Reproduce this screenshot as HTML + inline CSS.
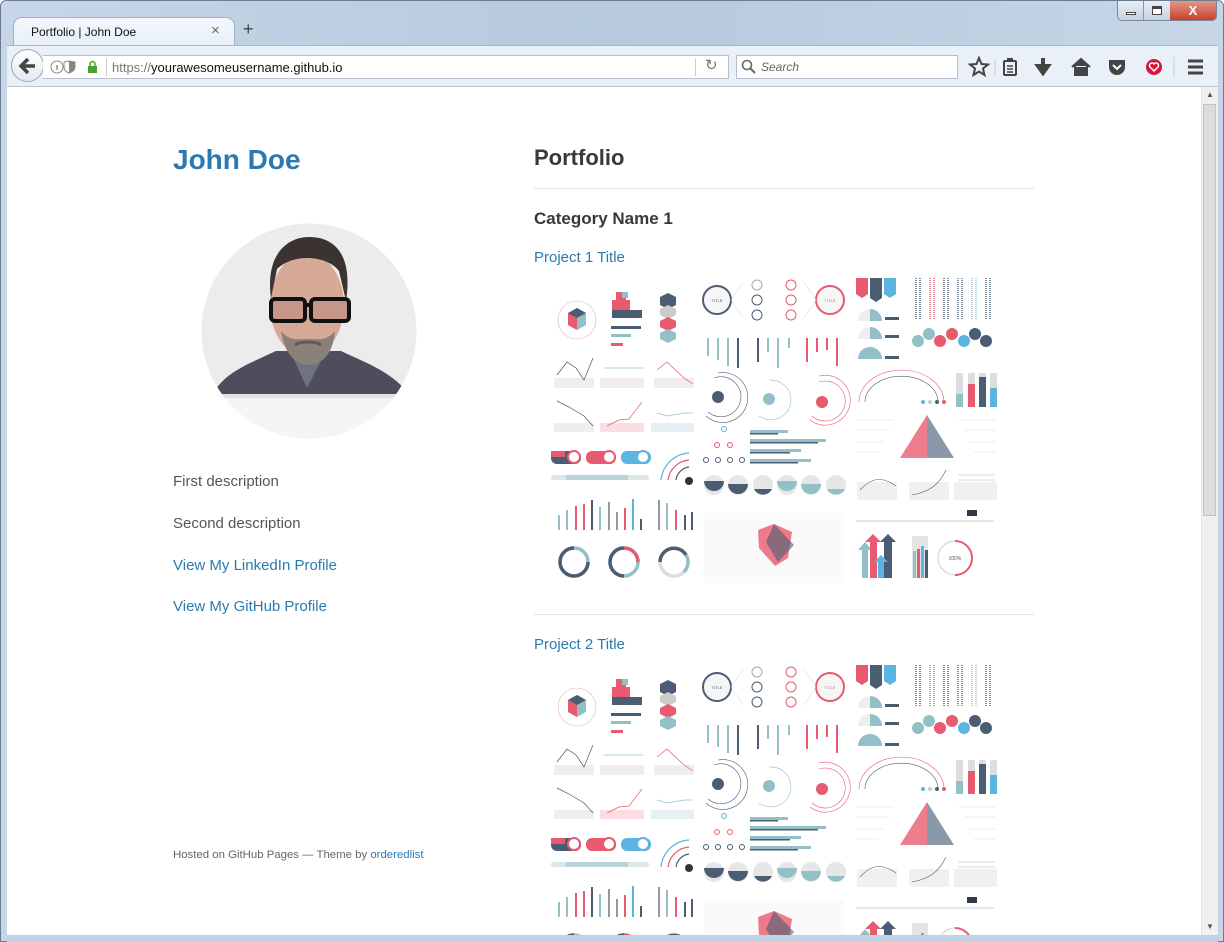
<!DOCTYPE html>
<html><head><meta charset="utf-8">
<style>
*{margin:0;padding:0;box-sizing:border-box}
body{width:1224px;height:942px;overflow:hidden;font-family:"Liberation Sans",sans-serif;background:#fff;position:relative}
.abs{position:absolute}
a{color:#2a7ab0;text-decoration:none}
</style></head><body>
<div class="abs" style="left:0;top:0;width:1224px;height:942px;background:linear-gradient(90deg,#c6d6e8,#b6c9dd 50%,#c6d6e8);border:1px solid #6d7d90;border-radius:6px 6px 0 0"></div>
<div class="abs" style="left:1117px;top:1px;width:100px;height:20px;border:1px solid #7a8899;border-top:none;border-radius:0 0 5px 5px;overflow:hidden;display:flex">
 <div style="width:26px;background:linear-gradient(#e8eef5,#c5d2e0);border-right:1px solid #8897a8;position:relative"><div class="abs" style="left:8px;top:11px;width:10px;height:3px;background:#fff;border:1px solid #444"></div></div>
 <div style="width:26px;background:linear-gradient(#e8eef5,#c5d2e0);position:relative"><div class="abs" style="left:8px;top:5px;width:10px;height:9px;border:1px solid #444;border-top:3px solid #444;background:#fff"></div></div>
 <div style="flex:1;background:linear-gradient(#e4988a,#c7402c);color:#fff;font-weight:bold;font-size:13px;text-align:center;line-height:19px">X</div>
</div>
<div class="abs" style="left:13px;top:17px;width:222px;height:30px;background:linear-gradient(#f5f8fb,#e6eef7);border:1px solid #9fb1c6;border-bottom:none;border-radius:9px 9px 0 0"></div>
<div class="abs" style="left:31px;top:25px;font-size:12px;color:#111">Portfolio | John Doe</div>
<div class="abs" style="left:211px;top:22px;font-size:15px;color:#666">×</div>
<div class="abs" style="left:243px;top:19px;font-size:18px;color:#444">+</div>
<div class="abs" style="left:7px;top:45px;width:1211px;height:42px;background:#e9f0f8;border-top:1px solid #a7b8cc;border-bottom:1px solid #b6c4d3"></div>
<div class="abs" style="left:11px;top:49px;width:33px;height:33px;border-radius:50%;border:1px solid #9aa8b8;background:linear-gradient(#fff,#e4eaf1)"></div>
<svg class="abs" style="left:18px;top:57px" width="20" height="18"><path d="M10 2 L3 9 L10 16 M3 9 H17" stroke="#444" stroke-width="3.5" fill="none"/></svg>
<div class="abs" style="left:43px;top:55px;width:686px;height:24px;background:#fff;border:1px solid #b4c0ce;border-left:none"></div>
<svg class="abs" style="left:50px;top:59px" width="50" height="16"><circle cx="7" cy="8" r="6" fill="none" stroke="#888"/><rect x="6.3" y="6" width="1.4" height="5" fill="#888"/><path d="M19 2 L25 3 V8 C25 11 22 13 19 14 Z" fill="#888"/><path d="M19 2 L25 3 V8 C25 11 22 13 19 14 C16 13 14 11 14 8 V3Z" fill="none" stroke="#888"/><rect x="38" y="7" width="9" height="7" fill="#4aa02c"/><path d="M40 7 V5 a2.5 2.5 0 0 1 5 0 V7" fill="none" stroke="#4aa02c" stroke-width="1.5"/></svg>
<div class="abs" style="left:106px;top:58px;width:1px;height:18px;background:#ccc"></div>
<div class="abs" style="left:112px;top:60px;font-size:13px;color:#111"><span style="color:#777">https://</span>yourawesomeusername.github.io</div>
<div class="abs" style="left:695px;top:58px;width:1px;height:18px;background:#ccc"></div>
<div class="abs" style="left:705px;top:56px;font-size:15px;color:#777">↻</div>
<div class="abs" style="left:736px;top:55px;width:222px;height:24px;background:#fff;border:1px solid #b4c0ce"></div>
<svg class="abs" style="left:741px;top:59px" width="16" height="16"><circle cx="6" cy="6" r="4.5" fill="none" stroke="#666" stroke-width="1.6"/><path d="M9 9 L14 14" stroke="#666" stroke-width="2"/></svg>
<div class="abs" style="left:761px;top:60px;font-size:12px;color:#666;font-style:italic">Search</div>
<svg class="abs" style="left:968px;top:55px" width="240" height="24">
 <path d="M11 3 L13.5 9 L20 9.5 L15 13.5 L16.5 20 L11 16.5 L5.5 20 L7 13.5 L2 9.5 L8.5 9 Z" fill="none" stroke="#444" stroke-width="2"/>
 <line x1="27" y1="4" x2="27" y2="20" stroke="#ccc"/>
 <rect x="36" y="6" width="12" height="14" rx="1" fill="none" stroke="#444" stroke-width="2"/><rect x="39" y="3" width="6" height="4" fill="#444"/><path d="M39 11h6M39 14h6M39 17h6" stroke="#444" stroke-width="1.5"/>
 <path d="M75 3 V12 M70 11 L75 18 L80 11 Z" stroke="#444" stroke-width="4" fill="#444"/>
 <path d="M104 12 L113 4 L122 12 M107 11 V20 H119 V11" fill="#444" stroke="#444" stroke-width="2"/>
 <path d="M141 5 H157 V12 C157 17 153 20 149 20 C145 20 141 17 141 12 Z" fill="#444"/><path d="M145 10 L149 14 L153 10" stroke="#fff" stroke-width="2" fill="none"/>
 <circle cx="186" cy="12" r="8" fill="#d7143c"/><path d="M186 16 L182 12 a2 2 0 0 1 4 -3 a2 2 0 0 1 4 3 Z" fill="none" stroke="#fff" stroke-width="1.5"/>
 <line x1="206" y1="2" x2="206" y2="22" stroke="#ccc"/>
 <path d="M220 6h15M220 12h15M220 18h15" stroke="#444" stroke-width="3"/>
</svg>
<div class="abs" style="left:7px;top:87px;width:1194px;height:848px;background:#fff"></div>
<div class="abs" style="left:1201px;top:87px;width:17px;height:848px;background:#f0f0f0;border-left:1px solid #e4e4e4"></div>
<div class="abs" style="left:1203px;top:104px;width:13px;height:412px;background:#dcdcdc;border:1px solid #c4c4c4"></div>
<div class="abs" style="left:1206px;top:90px;font-size:8px;color:#555">▲</div>
<div class="abs" style="left:1206px;top:922px;font-size:8px;color:#555">▼</div>
<div class="abs" style="left:7px;top:935px;width:1211px;height:7px;background:#c0d1e4"></div>

<div class="abs" style="left:173px;top:144px;font-size:28px;font-weight:bold;color:#2a7ab0">John Doe</div>
<svg class="abs" style="left:201px;top:223px" width="216" height="216">
 <defs><clipPath id="cc"><circle cx="108" cy="108" r="107.5"/></clipPath></defs>
 <g clip-path="url(#cc)">
  <rect width="216" height="216" fill="#ececec"/>
  <path d="M10 175 C20 150 50 140 75 128 L140 128 C165 140 195 150 210 175 Z" fill="#4f4d5c"/>
  <path d="M90 130 L106 165 L124 130 Z" fill="#6f7380"/>
  <ellipse cx="106" cy="82" rx="37" ry="52" fill="#d7a997"/>
  <path d="M70 75 C64 32 86 14 108 14 C134 14 152 32 145 78 L138 48 C126 32 92 30 76 46 Z" fill="#3a3330"/>
  <path d="M80 108 C84 136 100 142 107 142 C118 142 132 134 134 108 C126 118 118 116 107 116 C96 116 88 118 80 108Z" fill="#8a807a"/>
  <path d="M94 122 C100 118 114 118 120 122" stroke="#6a5550" stroke-width="3" fill="none"/>
  <rect x="70" y="76" width="34" height="22" rx="4" fill="#c7968a" stroke="#111" stroke-width="4"/>
  <rect x="110" y="76" width="38" height="22" rx="4" fill="#c7968a" stroke="#111" stroke-width="4"/>
  <rect x="102" y="80" width="10" height="4" fill="#111"/>
  <rect x="0" y="171" width="216" height="45" fill="#f5f5f5"/>
  <rect x="0" y="171" width="216" height="4" fill="#e2e2e2"/>
 </g>
</svg>
<div class="abs" style="left:173px;top:473px;font-size:15px;color:#555">First description</div>
<div class="abs" style="left:173px;top:515px;font-size:15px;color:#555">Second description</div>
<a class="abs" style="left:173px;top:557px;font-size:15px">View My LinkedIn Profile</a>
<a class="abs" style="left:173px;top:598px;font-size:15px">View My GitHub Profile</a>
<div class="abs" style="left:173px;top:849px;font-size:11.4px;color:#666">Hosted on GitHub Pages — Theme by <a>orderedlist</a></div>

<div class="abs" style="left:534px;top:145px;font-size:22px;font-weight:bold;color:#393939">Portfolio</div>
<div class="abs" style="left:534px;top:188px;width:500px;height:1px;background:#e2e2e2"></div>
<div class="abs" style="left:534px;top:209px;font-size:17px;font-weight:bold;color:#393939">Category Name 1</div>
<a class="abs" style="left:534px;top:249px;font-size:15px">Project 1 Title</a>
<div class="abs" style="left:534px;top:614px;width:500px;height:1px;background:#e2e2e2"></div>
<a class="abs" style="left:534px;top:636px;font-size:15px">Project 2 Title</a>

<svg class="abs" style="left:534px;top:270px" width="470" height="315" viewBox="0 0 470 315">
<defs><g id="info" font-family="Liberation Sans" >
 <circle cx="43" cy="50" r="19" fill="none" stroke="#eab" stroke-width=".6"/>
 <path d="M34 43 L43 38 L52 43 V55 L43 60 L34 55Z" fill="#93bfc7"/><path d="M34 43 L43 48 V60 L34 55Z" fill="#e85a6f"/><path d="M34 43 L43 38 L52 43 L43 48Z" fill="#4b5d73"/>
 <path d="M78 30h10v10h-10zM86 30h10v10h-10zM82 22h10v9h-10z" fill="#e85a6f"/><path d="M78 40h30v8H78z" fill="#4b5d73"/><rect x="88" y="22" width="6" height="6" fill="#93bfc7"/>
 <rect x="77" y="56" width="30" height="3" fill="#4b5d73"/><rect x="77" y="64" width="20" height="3" fill="#93bfc7"/><rect x="77" y="73" width="12" height="3" fill="#e85a6f"/>
 <path d="M126 27l8-4 8 4v8l-8 4-8-4z" fill="#4b5d73"/><path d="M126 39l8-4 8 4v6l-8 4-8-4z" fill="#ccc"/><path d="M126 51l8-4 8 4v6l-8 4-8-4z" fill="#e85a6f"/><path d="M126 63l8-4 8 4v6l-8 4-8-4z" fill="#93bfc7"/>
 <g fill="#eee"><rect x="20" y="108" width="40" height="10"/><rect x="66" y="108" width="44" height="10"/><rect x="120" y="108" width="40" height="10"/><rect x="20" y="153" width="40" height="9"/><rect x="66" y="153" width="44" height="9" fill="#fbdde2"/><rect x="117" y="153" width="43" height="9" fill="#e6f0f2"/></g>
 <polyline points="23,105 33,92 42,98 50,110 59,88" fill="none" stroke="#555" stroke-width=".7"/>
 <polyline points="70,98 90,98 109,98" fill="none" stroke="#93bfc7" stroke-width=".7"/>
 <polyline points="123,100 133,92 150,108 159,114" fill="none" stroke="#e85a6f" stroke-width=".7"/>
 <polyline points="23,131 35,137 50,146 59,156" fill="none" stroke="#555" stroke-width=".7"/>
 <polyline points="73,156 85,150 95,149 108,132" fill="none" stroke="#e85a6f" stroke-width=".7"/>
 <polyline points="123,143 133,146 150,143 159,143" fill="none" stroke="#93bfc7" stroke-width=".7"/>
 <rect x="17" y="181" width="30" height="13" rx="6" fill="#4b5d73"/><rect x="17" y="181" width="14" height="6" fill="#e85a6f"/><circle cx="40" cy="187" r="6" fill="#fff" stroke="#e85a6f" stroke-width="2"/>
 <rect x="52" y="181" width="30" height="13" rx="6" fill="#e85a6f"/><circle cx="75" cy="187" r="6" fill="#fff" stroke="#e85a6f" stroke-width="2"/>
 <rect x="87" y="181" width="30" height="13" rx="6" fill="#5bb5e0"/><circle cx="109" cy="187" r="6" fill="#fff" stroke="#5bb5e0" stroke-width="2"/>
 <rect x="17" y="205" width="98" height="5" rx="2" fill="#dfe6e8"/><rect x="32" y="205" width="62" height="5" fill="#b9d3d8"/>
 <path d="M127 210 A30 30 0 0 1 155 183" fill="none" stroke="#5bb5e0" stroke-width="1.2"/><path d="M134 210 A23 23 0 0 1 155 190" fill="none" stroke="#e85a6f" stroke-width="1.2"/><path d="M142 210 A15 15 0 0 1 155 197" fill="none" stroke="#4b5d73" stroke-width="1.2"/><circle cx="155" cy="211" r="4" fill="#333"/>
 <g fill="#93bfc7"><rect x="24" y="245" width="2" height="15"/><rect x="32" y="240" width="2" height="20"/><rect x="65" y="237" width="2" height="23"/><rect x="132" y="233" width="2" height="27"/><rect x="150" y="245" width="2" height="15" fill="#4b5d73"/></g>
 <g fill="#e85a6f"><rect x="41" y="236" width="2" height="24"/><rect x="49" y="234" width="2" height="26"/><rect x="90" y="238" width="2" height="22"/><rect x="141" y="240" width="2" height="20"/></g>
 <g fill="#5bb5e0"><rect x="57" y="230" width="2" height="30" fill="#4b5d73"/><rect x="98" y="229" width="2" height="31"/><rect x="82" y="242" width="2" height="18" fill="#999"/><rect x="74" y="232" width="2" height="28" fill="#999"/><rect x="106" y="249" width="2" height="11" fill="#4b5d73"/><rect x="124" y="230" width="2" height="30" fill="#999"/><rect x="157" y="242" width="2" height="18" fill="#4b5d73"/></g>
 <circle cx="40" cy="292" r="14" fill="none" stroke="#93bfc7" stroke-width="3.5"/><path d="M40 278 A14 14 0 1 0 54 292" fill="none" stroke="#4b5d73" stroke-width="3.5"/>
 <circle cx="90" cy="292" r="14" fill="none" stroke="#93bfc7" stroke-width="3.5"/><path d="M90 278 A14 14 0 0 1 104 292" fill="none" stroke="#e85a6f" stroke-width="3.5"/><path d="M76 292 A14 14 0 0 1 90 278" fill="none" stroke="#4b5d73" stroke-width="3.5"/><path d="M90 306 A14 14 0 0 1 76 292" fill="none" stroke="#4b5d73" stroke-width="3.5"/>
 <circle cx="140" cy="292" r="14" fill="none" stroke="#ddd" stroke-width="3.5"/><path d="M126 292 A14 14 0 0 1 152 285" fill="none" stroke="#4b5d73" stroke-width="3.5"/><path d="M152 285 A14 14 0 0 1 150 302" fill="none" stroke="#93bfc7" stroke-width="3.5"/>
 <circle cx="183" cy="30" r="14" fill="#f6f6f6" stroke="#4b5d73" stroke-width="2"/><text x="183" y="32" font-size="4" text-anchor="middle" fill="#555">TITLE</text>
 <circle cx="296" cy="30" r="14" fill="#f6f6f6" stroke="#e85a6f" stroke-width="2"/><text x="296" y="32" font-size="4" text-anchor="middle" fill="#e85a6f">TITLE</text>
 <g fill="none" stroke-width="1"><circle cx="223" cy="15" r="5" stroke="#aaa"/><circle cx="223" cy="30" r="5" stroke="#4b5d73"/><circle cx="223" cy="45" r="5" stroke="#4b5d73"/><circle cx="257" cy="15" r="5" stroke="#e85a6f"/><circle cx="257" cy="30" r="5" stroke="#e85a6f"/><circle cx="257" cy="45" r="5" stroke="#e85a6f"/></g>
 <path d="M197 30 L209 12 M197 30 L209 48 M282 30 L270 12 M282 30 L270 48" stroke="#ddd" stroke-width=".6"/>
 <g fill="#93bfc7"><rect x="173" y="68" width="2" height="18"/><rect x="183" y="68" width="2" height="22"/><rect x="193" y="68" width="2" height="28"/><rect x="203" y="68" width="2" height="30" fill="#4b5d73"/><rect x="223" y="68" width="2" height="24" fill="#4b5d73"/><rect x="233" y="68" width="2" height="14"/><rect x="243" y="68" width="2" height="30"/><rect x="254" y="68" width="2" height="10"/></g>
 <g fill="#e85a6f"><rect x="272" y="68" width="2" height="24"/><rect x="282" y="68" width="2" height="14"/><rect x="292" y="68" width="2" height="12"/><rect x="302" y="68" width="2" height="28"/></g>
 <circle cx="184" cy="127" r="6" fill="#4b5d73"/><path d="M180 108 A20 20 0 1 1 174 142" fill="none" stroke="#4b5d73" stroke-width=".6"/><path d="M184 103 A25 25 0 1 1 172 146" fill="none" stroke="#4b5d73" stroke-width=".6"/>
 <circle cx="235" cy="129" r="6" fill="#93bfc7"/><path d="M235 110 A20 20 0 1 1 225 146" fill="none" stroke="#93bfc7" stroke-width=".6"/>
 <circle cx="288" cy="132" r="6" fill="#e85a6f"/><path d="M285 112 A20 20 0 1 1 278 146" fill="none" stroke="#e85a6f" stroke-width=".6"/><path d="M285 106 A25 25 0 1 1 276 150" fill="none" stroke="#e85a6f" stroke-width=".6"/>
 <circle cx="190" cy="159" r="2.5" fill="none" stroke="#5bb5e0"/><circle cx="183" cy="175" r="2.5" fill="none" stroke="#e85a6f"/><circle cx="196" cy="175" r="2.5" fill="none" stroke="#e85a6f"/>
 <g fill="none" stroke="#4b5d73"><circle cx="172" cy="190" r="2.5"/><circle cx="184" cy="190" r="2.5"/><circle cx="196" cy="190" r="2.5"/><circle cx="208" cy="190" r="2.5"/></g>
 <g fill="#93bfc7"><rect x="216" y="160" width="38" height="3"/><rect x="216" y="169" width="76" height="3"/><rect x="216" y="179" width="51" height="3"/><rect x="216" y="189" width="61" height="3"/></g>
 <g fill="#4b5d73"><rect x="216" y="163" width="28" height="1.5"/><rect x="216" y="172" width="68" height="1.5"/><rect x="216" y="182" width="40" height="1.5"/><rect x="216" y="192" width="48" height="1.5"/></g>
 <g><circle cx="180" cy="215" r="10" fill="#e6e6e6"/><path d="M170 211 H190 A10 10 0 0 1 170 211Z" fill="#4b5d73"/>
 <circle cx="204" cy="215" r="10" fill="#e6e6e6"/><path d="M194 214 H214 A10 10 0 0 1 194 214Z" fill="#4b5d73"/>
 <circle cx="229" cy="215" r="10" fill="#e6e6e6"/><path d="M220 219 H238 A10 10 0 0 1 220 219Z" fill="#4b5d73"/>
 <circle cx="253" cy="215" r="10" fill="#e6e6e6"/><path d="M243 211 H263 A10 10 0 0 1 243 211Z" fill="#93bfc7"/>
 <circle cx="277" cy="215" r="10" fill="#e6e6e6"/><path d="M267 214 H287 A10 10 0 0 1 267 214Z" fill="#93bfc7"/>
 <circle cx="302" cy="215" r="10" fill="#e6e6e6"/><path d="M293 219 H311 A10 10 0 0 1 293 219Z" fill="#93bfc7"/></g>
 <rect x="170" y="243" width="140" height="70" fill="#fafafa"/>
 <path d="M240 254 L258 262 L254 288 L241 296 L225 278 L224 260Z" fill="#e85a6f" opacity=".8"/><path d="M240 254 L260 275 L244 292 L232 272Z" fill="#4b5d73" opacity=".6"/>
 <path d="M322 8h12v16l-6 4-6-4z" fill="#e85a6f"/><path d="M336 8h12v20l-6 4-6-4z" fill="#4b5d73"/><path d="M350 8h12v16l-6 4-6-4z" fill="#5bb5e0"/>
 <g stroke-width="1.4"><path d="M382 8V50M386 8V50" stroke="#4b5d73" stroke-dasharray="1 1"/><path d="M396 8V50M400 8V50" stroke="#e85a6f" stroke-dasharray="1 1"/><path d="M410 8V50M414 8V50" stroke="#4b5d73" stroke-dasharray="1 1"/><path d="M424 8V50M428 8V50" stroke="#4b5d73" stroke-dasharray="1 1"/><path d="M438 8V50M442 8V50" stroke="#93bfc7" stroke-dasharray="1 1"/><path d="M452 8V50M456 8V50" stroke="#4b5d73" stroke-dasharray="1 1"/></g>
 <path d="M324 51 A12 12 0 0 1 348 51Z" fill="#eee"/><path d="M336 39 A12 12 0 0 1 348 51 H336Z" fill="#93bfc7"/>
 <path d="M324 69 A12 12 0 0 1 348 69Z" fill="#eee"/><path d="M336 57 A12 12 0 0 1 348 69 H336Z" fill="#93bfc7"/>
 <path d="M324 89 A12 12 0 0 1 348 89Z" fill="#93bfc7"/>
 <rect x="351" y="47" width="14" height="3" fill="#4b5d73"/><rect x="351" y="65" width="14" height="3" fill="#4b5d73"/><rect x="351" y="86" width="14" height="3" fill="#4b5d73"/>
 <g><circle cx="384" cy="71" r="6" fill="#93bfc7"/><circle cx="395" cy="64" r="6" fill="#93bfc7"/><circle cx="406" cy="71" r="6" fill="#e85a6f"/><circle cx="418" cy="64" r="6" fill="#e85a6f"/><circle cx="430" cy="71" r="6" fill="#5bb5e0"/><circle cx="441" cy="64" r="6" fill="#4b5d73"/><circle cx="452" cy="71" r="6" fill="#4b5d73"/></g>
 <path d="M325 132 A40 30 0 0 1 410 132" fill="none" stroke="#e85a6f" stroke-width=".6"/><path d="M331 132 A34 24 0 0 1 404 132" fill="none" stroke="#4b5d73" stroke-width=".6"/>
 <circle cx="389" cy="132" r="2" fill="#5bb5e0"/><circle cx="396" cy="132" r="2" fill="#ccc"/><circle cx="403" cy="132" r="2" fill="#4b5d73"/><circle cx="410" cy="132" r="2" fill="#e85a6f"/>
 <rect x="422" y="103" width="7" height="34" rx="1" fill="#ddd"/><rect x="422" y="124" width="7" height="13" fill="#93bfc7"/>
 <rect x="434" y="103" width="7" height="34" rx="1" fill="#ddd"/><rect x="434" y="114" width="7" height="23" fill="#e85a6f"/>
 <rect x="445" y="103" width="7" height="34" rx="1" fill="#ddd"/><rect x="445" y="107" width="7" height="30" fill="#4b5d73"/>
 <rect x="456" y="103" width="7" height="34" rx="1" fill="#ddd"/><rect x="456" y="118" width="7" height="19" fill="#5bb5e0"/>
 <path d="M393 145 L366 188 H393Z" fill="#ec7e8d"/><path d="M393 145 L420 188 H393Z" fill="#8a98a8"/>
 <path d="M322 150H360M322 160H355M322 172H350M322 182H345M425 150H462M430 160H462M435 172H462M440 182H462" stroke="#ddd" stroke-width=".6"/>
 <rect x="323" y="212" width="40" height="18" fill="#f0f0f0"/><rect x="375" y="212" width="40" height="18" fill="#f0f0f0"/><rect x="420" y="212" width="43" height="18" fill="#f0f0f0"/>
 <path d="M326 220 C340 205 350 208 362 216" fill="none" stroke="#4b5d73" stroke-width=".6"/><path d="M378 225 C395 222 405 215 412 200" fill="none" stroke="#4b5d73" stroke-width=".6"/><path d="M424 205 H461 M424 210 H461" stroke="#93bfc7" stroke-width=".6"/>
 <path d="M322 251 H460" stroke="#999" stroke-width=".6"/><rect x="433" y="240" width="10" height="6" fill="#2f3a48"/>
 <path d="M328 308 V280 H324 L331 272 L338 280 H334 V308Z" fill="#93bfc7"/><path d="M336 308 V272 H331 L339 264 L347 272 H343 V308Z" fill="#e85a6f"/><path d="M350 308 V272 H346 L354 264 L362 272 H358 V308Z" fill="#4b5d73"/><path d="M344 308 V292 H340 L347 285 L354 292 H350 V308Z" fill="#5bb5e0"/>
 <rect x="378" y="266" width="16" height="42" fill="#e4e4e4"/><rect x="379" y="281" width="3" height="27" fill="#93bfc7"/><rect x="383" y="279" width="3" height="29" fill="#e85a6f"/><rect x="387" y="276" width="3" height="32" fill="#5bb5e0"/><rect x="391" y="280" width="3" height="28" fill="#4b5d73"/>
 <circle cx="421" cy="288" r="17" fill="none" stroke="#ccc" stroke-width="1"/><path d="M421 271 A17 17 0 0 1 421 305" fill="none" stroke="#e85a6f" stroke-width="2"/><text x="421" y="290" font-size="5" text-anchor="middle" fill="#555">100%</text>
</g></defs>
<use href="#info"/>
</svg>
<svg class="abs" style="left:534px;top:657px" width="470" height="278" viewBox="0 0 470 278"><use href="#info"/></svg>
</body></html>
